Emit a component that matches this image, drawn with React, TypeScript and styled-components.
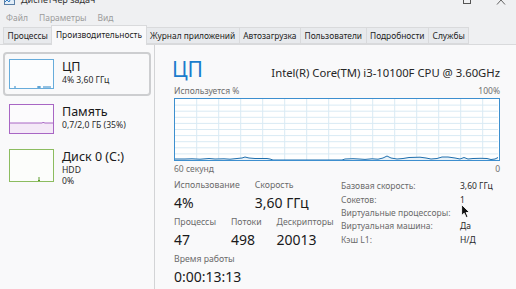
import React from "react";
import styled, { createGlobalStyle } from "styled-components";

const GlobalStyle = createGlobalStyle`
  html, body {
    margin: 0;
    padding: 0;
  }
  body {
    width: 516px;
    height: 289px;
    overflow: hidden;
    background: #f9f9fa;
    font-family: "Noto Sans", "Open Sans", sans-serif;
    color: #1a1a1a;
  }
`;

const Window = styled.div`
  position: relative;
  width: 516px;
  height: 289px;
  display: flex;
  flex-direction: column;
  overflow: hidden;
`;

const TitleBar = styled.div`
  height: 9px;
  flex-shrink: 0;
  background: #eff0f2;
  display: flex;
  justify-content: space-between;
  align-items: flex-start;
  padding: 0 10px 0 4px;
  overflow: hidden;
`;

const TitleText = styled.div`
  display: flex;
  align-items: center;
  gap: 6px;
  margin-top: -7px;
  font-size: 9px;
  line-height: 14px;
  color: #333;
`;

const WinControls = styled.div`
  display: flex;
  gap: 25px;
  margin-top: -5px;
`;

const MenuBar = styled.div`
  height: 16px;
  flex-shrink: 0;
  display: flex;
  align-items: center;
  gap: 11px;
  padding-left: 6px;
  background: #eff0f2;
  font-size: 8.5px;
  color: #9c9c9c;
`;

const TabStrip = styled.div`
  height: 20px;
  flex-shrink: 0;
  box-sizing: border-box;
  display: flex;
  align-items: flex-end;
  padding-left: 3px;
  background: #eff0f2;
  border-bottom: 1px solid #d9dadc;
`;

const Tab = styled.div<{ $active?: boolean }>`
  box-sizing: border-box;
  height: ${(p) => (p.$active ? 20 : 17)}px;
  margin-bottom: ${(p) => (p.$active ? -1 : 0)}px;
  margin-right: -1px;
  padding: 0 3.5px;
  display: flex;
  align-items: center;
  padding-bottom: ${(p) => (p.$active ? 2 : 0)}px;
  font-size: 8.4px;
  color: #1e1e1e;
  white-space: nowrap;
  background: ${(p) => (p.$active ? "#f9f9fa" : "#e8eaed")};
  border: 1px solid #d9dadc;
  border-bottom: ${(p) => (p.$active ? "none" : "1px solid #d9dadc")};
  position: relative;
  z-index: ${(p) => (p.$active ? 1 : 0)};
`;

const Content = styled.div`
  flex: 1;
  display: flex;
  min-height: 0;
`;

const LeftPanel = styled.div`
  width: 155px;
  flex-shrink: 0;
  box-sizing: border-box;
  border-right: 1px solid #d3d4d6;
  padding: 7px 3px 0 3px;
  display: flex;
  flex-direction: column;
  gap: 1px;
`;

const ResourceItem = styled.div<{ $selected?: boolean }>`
  height: 44px;
  box-sizing: border-box;
  display: flex;
  gap: 8px;
  padding: 5px 0 0 4px;
  border: 2px solid ${(p) => (p.$selected ? "#cdced0" : "transparent")};
  border-radius: 4px;
`;

const ThumbSvg = styled.svg`
  flex-shrink: 0;
  display: block;
`;

const ItemText = styled.div`
  display: flex;
  flex-direction: column;
`;

const ItemTitle = styled.div`
  font-size: 12.5px;
  line-height: 16px;
  color: #1a1a1a;
  white-space: nowrap;
`;

const ItemSub = styled.div`
  font-size: 8.6px;
  line-height: 10.5px;
  color: #2a2a2a;
  white-space: nowrap;
`;

const RightPanel = styled.div`
  flex: 1;
  box-sizing: border-box;
  padding: 11px 16px 0 19px;
  display: flex;
  flex-direction: column;
`;

const Header = styled.div`
  display: flex;
  justify-content: space-between;
  align-items: baseline;
`;

const BigTitle = styled.div`
  font-size: 21px;
  line-height: 27px;
  margin-left: -2px;
  color: #1b7ccc;
`;

const CpuName = styled.div`
  font-size: 11.3px;
  color: #262626;
`;

const AxisRow = styled.div<{ $top: number }>`
  display: flex;
  justify-content: space-between;
  font-size: 8.5px;
  line-height: 12px;
  color: #6e6e6e;
  margin-top: ${(p) => p.$top}px;
`;

const Chart = styled.div`
  height: 63px;
  box-sizing: border-box;
  border: 1px solid #3d8fcf;
  background: #ffffff;
  margin-top: 1px;
`;

const Stats = styled.div`
  display: grid;
  grid-template-columns: 167px 1fr;
  margin-top: 4px;
`;

const StatColumn = styled.div`
  display: flex;
  flex-direction: column;
  gap: 2px;
`;

const StatRow = styled.div`
  display: flex;
  gap: 15px;
`;

const Stat = styled.div`
  display: flex;
  flex-direction: column;
`;

const StatLabel = styled.div`
  font-size: 8.7px;
  line-height: 13px;
  color: #6b6b6b;
  white-space: nowrap;
`;

const StatValue = styled.div`
  font-size: 14px;
  line-height: 22px;
  color: #1a1a1a;
  white-space: nowrap;
`;

const InfoGrid = styled.div`
  display: grid;
  grid-template-columns: 119px auto;
  grid-auto-rows: 13.4px;
  align-items: center;
  font-size: 8.5px;
  color: #6b6b6b;
  white-space: nowrap;
`;

const InfoValue = styled.div`
  color: #2a2a2a;
`;

const Cursor = styled.svg`
  position: absolute;
  left: 461px;
  top: 204px;
`;

// chart trace: [x, height above bottom]
const cpuTrace: [number, number][] = [
  [0, 1], [10, 1], [17, 1.2], [25, 0.8], [34, 1.5], [40, 1], [49, 1.2], [55, 0.8],
  [62, 1.5], [67, 2], [70, 3], [74, 2], [80, 1.5], [86, 1.5], [92, 1.5], [95, 1],
  [98, 0], [167, 0], [170, 1], [178, 1.3], [184, 1], [190, 0.6], [197, 1.2], [203, 0.8],
  [208, 2], [212, 4], [216, 2], [222, 1], [228, 1.5], [234, 2.5], [245, 2.8], [251, 2],
  [256, 1], [262, 1.5], [267, 3], [273, 3], [280, 2], [285, 1], [289, 2.5], [293, 1],
  [298, 1.5], [306, 1.7], [312, 1.5], [316, 0.5], [320, 1], [323, 2.5],
];

const CpuChart = () => {
  const w = 323;
  const h = 61;
  const vLines = [];
  for (let x = 21.7; x < w; x += 22) vLines.push(x);
  const hLines = [];
  for (let i = 1; i < 10; i++) hLines.push((h / 10) * i);
  const line = cpuTrace.map(([x, v]) => `${x},${h - v}`).join(" ");
  return (
    <svg width={w} height={h} style={{ display: "block" }}>
      {vLines.map((x) => (
        <line key={"v" + x} x1={x} x2={x} y1={0} y2={h} stroke="#d9eaf4" strokeWidth={1} />
      ))}
      {hLines.map((y) => (
        <line key={"h" + y} x1={0} x2={w} y1={y} y2={y} stroke="#d9eaf4" strokeWidth={1} />
      ))}
      <polygon points={`0,${h} ${line} ${w},${h}`} fill="#e8f2f9" />
      <polyline points={line} fill="none" stroke="#1f6fae" strokeWidth={1} />
    </svg>
  );
};

const CpuThumb = () => (
  <ThumbSvg width={45} height={30}>
    <rect x={0.5} y={0.5} width={44} height={29} fill="#fcfdfe" stroke="#67acdb" />
    <line x1={5} x2={7} y1={28} y2={28} stroke="#2d86c6" />
    <line x1={28} x2={32} y1={28} y2={28} stroke="#2d86c6" />
    <line x1={34} x2={42} y1={28} y2={28} stroke="#2d86c6" />
    <line x1={30} x2={30} y1={27} y2={29} stroke="#2d86c6" />
  </ThumbSvg>
);

const MemThumb = () => (
  <ThumbSvg width={45} height={30}>
    <rect x={0.5} y={0.5} width={44} height={29} fill="#fcfbfd" stroke="#a866c4" />
    <rect x={1} y={19} width={43} height={10} fill="#f4e9f7" />
    <polyline points="1,19 33,19 34,18.4 36,19 44,19" fill="none" stroke="#a866c4" />
  </ThumbSvg>
);

const DiskThumb = () => (
  <ThumbSvg width={45} height={33}>
    <rect x={0.5} y={0.5} width={44} height={32} fill="#fcfdfb" stroke="#8cbc5f" />
    <line x1={30} x2={30} y1={28} y2={32} stroke="#5b9c2a" />
    <line x1={29} x2={31} y1={31.5} y2={31.5} stroke="#5b9c2a" />
  </ThumbSvg>
);

const tabs = [
  "Процессы",
  "Производительность",
  "Журнал приложений",
  "Автозагрузка",
  "Пользователи",
  "Подробности",
  "Службы",
];

const info: [string, string][] = [
  ["Базовая скорость:", "3,60 ГГц"],
  ["Сокетов:", "1"],
  ["Виртуальные процессоры:", ""],
  ["Виртуальная машина:", "Да"],
  ["Кэш L1:", "Н/Д"],
];

export default function App() {
  return (
    <>
      <GlobalStyle />
      <Window>
        <TitleBar>
          <TitleText>
            <svg width={11} height={10}>
              <rect x={0.5} y={0.5} width={10} height={9} fill="#e3eef8" stroke="#5b7fa6" />
              <polyline points="1,7 3,5 5,7 7,3 10,5" fill="none" stroke="#2f78c0" />
            </svg>
            Диспетчер задач
          </TitleText>
          <WinControls>
            <svg width={8} height={10}>
              <rect x={0.5} y={0.5} width={7} height={8} fill="none" stroke="#555" />
            </svg>
            <svg width={10} height={10}>
              <path d="M1,0.5 L9,9.5 M9,0.5 L1,9.5" stroke="#555" strokeWidth={0.9} />
            </svg>
          </WinControls>
        </TitleBar>
        <MenuBar>
          <span>Файл</span>
          <span>Параметры</span>
          <span>Вид</span>
        </MenuBar>
        <TabStrip>
          {tabs.map((t) => (
            <Tab key={t} $active={t === "Производительность"}>
              {t}
            </Tab>
          ))}
        </TabStrip>
        <Content>
          <LeftPanel>
            <ResourceItem $selected>
              <CpuThumb />
              <ItemText>
                <ItemTitle>ЦП</ItemTitle>
                <ItemSub>4% 3,60 ГГц</ItemSub>
              </ItemText>
            </ResourceItem>
            <ResourceItem>
              <MemThumb />
              <ItemText>
                <ItemTitle>Память</ItemTitle>
                <ItemSub>0,7/2,0 ГБ (35%)</ItemSub>
              </ItemText>
            </ResourceItem>
            <ResourceItem>
              <DiskThumb />
              <ItemText>
                <ItemTitle>Диск 0 (C:)</ItemTitle>
                <ItemSub>HDD</ItemSub>
                <ItemSub>0%</ItemSub>
              </ItemText>
            </ResourceItem>
          </LeftPanel>
          <RightPanel>
            <Header>
              <BigTitle>ЦП</BigTitle>
              <CpuName>Intel(R) Core(TM) i3-10100F CPU @ 3.60GHz</CpuName>
            </Header>
            <AxisRow $top={2}>
              <span>Используется %</span>
              <span>100%</span>
            </AxisRow>
            <Chart>
              <CpuChart />
            </Chart>
            <AxisRow $top={2}>
              <span>60 секунд</span>
              <span>0</span>
            </AxisRow>
            <Stats>
              <StatColumn>
                <StatRow>
                  <Stat>
                    <StatLabel>Использование</StatLabel>
                    <StatValue>4%</StatValue>
                  </Stat>
                  <Stat>
                    <StatLabel>Скорость</StatLabel>
                    <StatValue>3,60 ГГц</StatValue>
                  </Stat>
                </StatRow>
                <StatRow>
                  <Stat>
                    <StatLabel>Процессы</StatLabel>
                    <StatValue>47</StatValue>
                  </Stat>
                  <Stat>
                    <StatLabel>Потоки</StatLabel>
                    <StatValue>498</StatValue>
                  </Stat>
                  <Stat>
                    <StatLabel>Дескрипторы</StatLabel>
                    <StatValue>20013</StatValue>
                  </Stat>
                </StatRow>
                <StatRow>
                  <Stat>
                    <StatLabel>Время работы</StatLabel>
                    <StatValue>0:00:13:13</StatValue>
                  </Stat>
                </StatRow>
              </StatColumn>
              <InfoGrid>
                {info.map(([k, v]) => (
                  <React.Fragment key={k}>
                    <div>{k}</div>
                    <InfoValue>{v}</InfoValue>
                  </React.Fragment>
                ))}
              </InfoGrid>
            </Stats>
          </RightPanel>
        </Content>
        <Cursor width={10} height={15} viewBox="0 0 10 15">
          <path
            d="M0.6,0.6 L0.6,11.5 L3.2,9.2 L5.2,13.6 L7,12.8 L5.1,8.5 L8.6,8.5 Z"
            fill="#111"
            stroke="#fff"
            strokeWidth={0.9}
            strokeLinejoin="round"
          />
        </Cursor>
      </Window>
    </>
  );
}
